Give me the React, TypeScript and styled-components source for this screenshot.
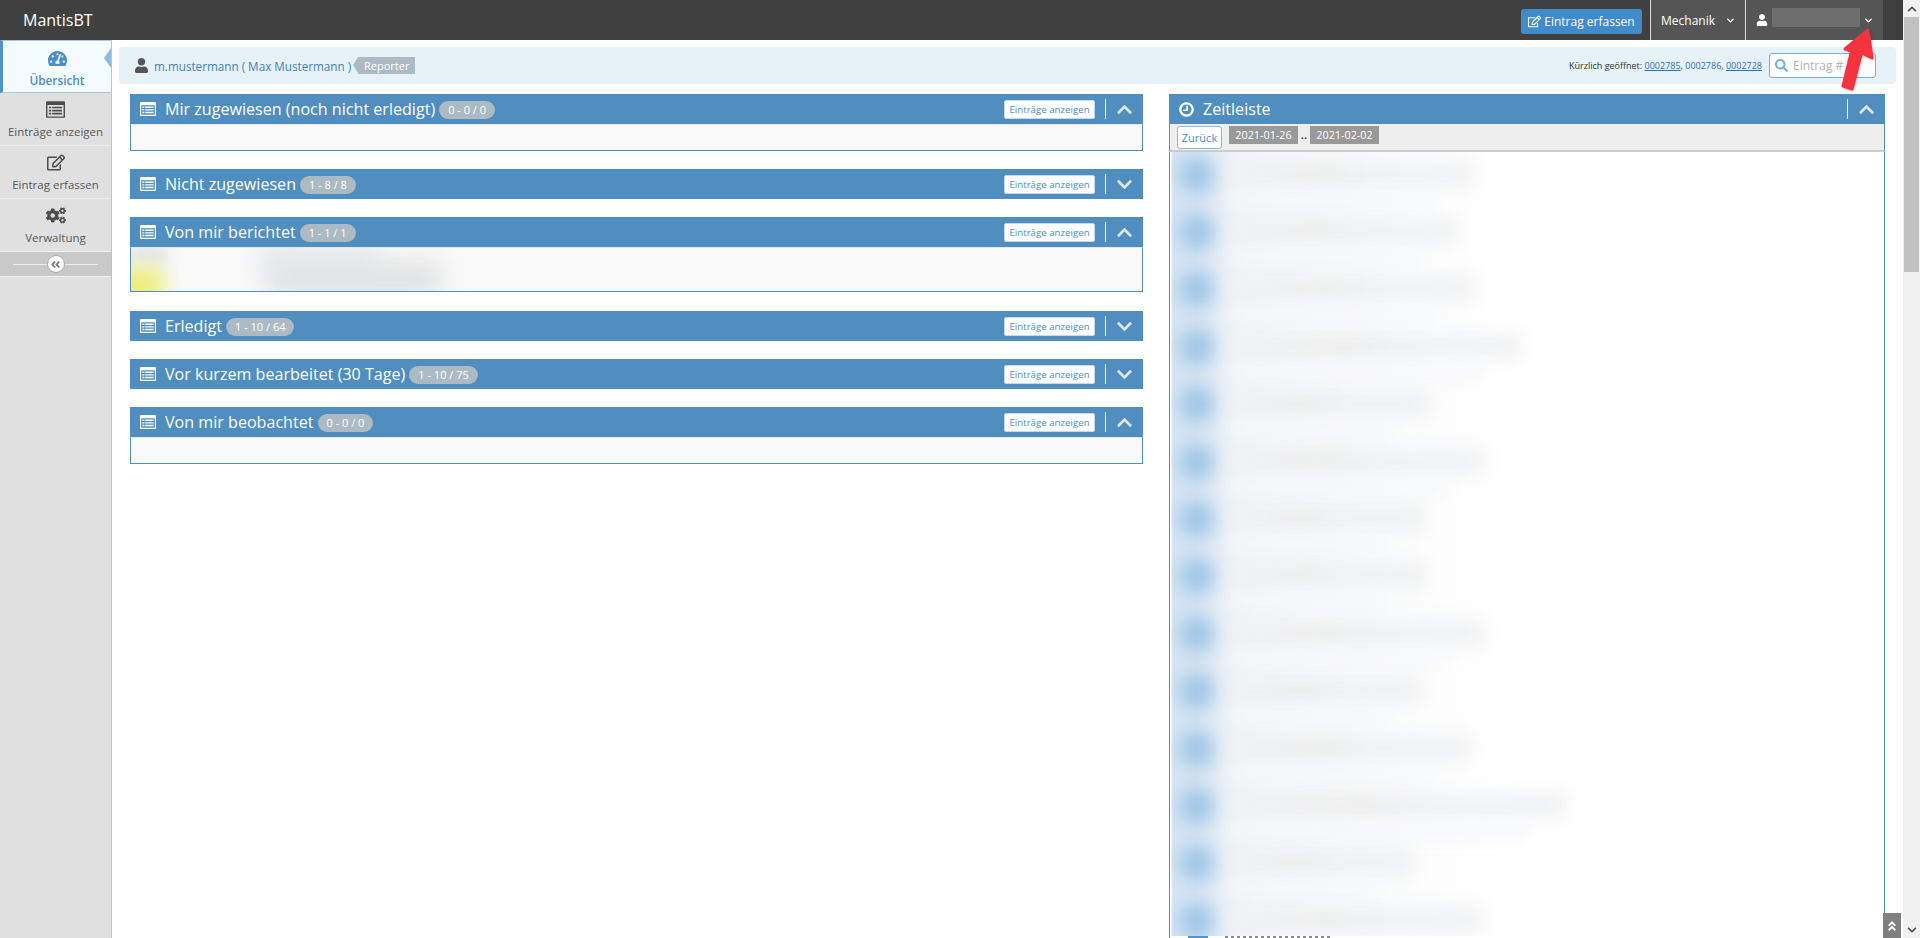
import styled, { createGlobalStyle } from "styled-components"
import {
  FaAngleDoubleLeft,
  FaAngleDoubleUp,
  FaChevronDown,
  FaChevronUp,
  FaCogs,
  FaRegEdit,
  FaSearch,
  FaTachometerAlt,
  FaUser,
} from "react-icons/fa"
import { FiChevronDown } from "react-icons/fi"

const BLUE = "#4f8ebf"

const GlobalStyle = createGlobalStyle`
  html, body {
    margin: 0;
    padding: 0;
    height: 100%;
    overflow: hidden;
    background: #fff;
    font-family: "Open Sans", "Liberation Sans", sans-serif;
  }
  * { box-sizing: border-box; }
`

const ListIcon = ({ size = 16 }: { size?: number }) => (
  <svg width={size} height={size * 0.875} viewBox="0 0 16 14" fill="currentColor">
    <path
      fillRule="evenodd"
      d="M1 0h14a1 1 0 0 1 1 1v12a1 1 0 0 1-1 1H1a1 1 0 0 1-1-1V1a1 1 0 0 1 1-1zM1.2 3.2v9.3a.3.3 0 0 0 .3.3h13a.3.3 0 0 0 .3-.3V3.2z"
    />
    <path d="M2.4 4.6h2v1.4h-2zM5.2 4.6h8.4v1.4H5.2zM2.4 7.2h2v1.4h-2zM5.2 7.2h8.4v1.4H5.2zM2.4 9.8h2v1.4h-2zM5.2 9.8h8.4v1.4H5.2z" />
  </svg>
)

const ClockIcon = () => (
  <svg width="15" height="15" viewBox="0 0 16 16" fill="none" stroke="currentColor">
    <circle cx="8" cy="8" r="6.6" strokeWidth="2.4" />
    <path d="M8.6 4v4.8H4.6" strokeWidth="1.8" />
  </svg>
)

const App = () => {
  return (
    <>
      <GlobalStyle />
      <Screen>
        <Page>
          <Navbar>
            <Brand>MantisBT</Brand>
            <NavRight>
              <ReportButton>
                <FaRegEdit size={13} />
                Eintrag erfassen
              </ReportButton>
              <NavItem $width={95}>
                Mechanik
                <FiChevronDown size={11} strokeWidth={3} />
              </NavItem>
              <UserItem>
                <FaUser size={12} />
                <HiddenName />
                <FiChevronDown size={11} strokeWidth={3} />
              </UserItem>
            </NavRight>
          </Navbar>
          <Below>
            <Sidebar>
              <ActiveMenuItem>
                <FaTachometerAlt size={19} />
                Übersicht
              </ActiveMenuItem>
              <MenuItem>
                <ListIcon size={19} />
                Einträge anzeigen
              </MenuItem>
              <MenuItem>
                <FaRegEdit size={18} />
                Eintrag erfassen
              </MenuItem>
              <MenuItem>
                <FaCogs size={20} />
                Verwaltung
              </MenuItem>
              <CollapseBar>
                <CollapseKnob>
                  <FaAngleDoubleLeft size={11} />
                </CollapseKnob>
              </CollapseBar>
            </Sidebar>
            <Main>
              <Breadcrumbs>
                <UserLine>
                  <FaUser size={15} />
                  <UserLink>m.mustermann ( Max Mustermann )</UserLink>
                  <RoleLabel>Reporter</RoleLabel>
                </UserLine>
                <Recent>
                  <span>
                    Kürzlich geöffnet: <RecentLink $done>0002785</RecentLink>,{" "}
                    <RecentLink>0002786</RecentLink>, <RecentLink $done>0002728</RecentLink>
                  </span>
                  <SearchBox>
                    <FaSearch size={13} />
                    <SearchInput placeholder="Eintrag #" />
                  </SearchBox>
                </Recent>
              </Breadcrumbs>
              <Columns>
                <LeftColumn>
                  <Widget title="Mir zugewiesen (noch nicht erledigt)" count="0 - 0 / 0" open>
                    <EmptyBody />
                  </Widget>
                  <Widget title="Nicht zugewiesen" count="1 - 8 / 8" />
                  <Widget title="Von mir berichtet" count="1 - 1 / 1" open>
                    <ReportedBody>
                      <BlurPatch $left={-4} $top={-6} $w={40} $h={24} $color="#e4e7e8" $blur={8} />
                      <BlurPatch $left={-18} $top={20} $w={50} $h={38} $color="#eded78" $blur={10} />
                      <BlurPatch $left={128} $top={-2} $w={120} $h={24} $color="#e6ebf1" $blur={11} />
                      <BlurPatch $left={135} $top={14} $w={175} $h={34} $color="#e0e1e2" $blur={12} />
                    </ReportedBody>
                  </Widget>
                  <ShiftedWidget>
                    <Widget title="Erledigt" count="1 - 10 / 64" />
                  </ShiftedWidget>
                  <Widget title="Vor kurzem bearbeitet (30 Tage)" count="1 - 10 / 75" />
                  <Widget title="Von mir beobachtet" count="0 - 0 / 0" open>
                    <EmptyBody />
                  </Widget>
                </LeftColumn>
                <Timeline>
                  <WidgetHeader>
                    <WidgetTitle>
                      <ClockIcon />
                      <TitleText>Zeitleiste</TitleText>
                    </WidgetTitle>
                    <WidgetTools>
                      <ToolDivider />
                      <FaChevronUp size={17} />
                    </WidgetTools>
                  </WidgetHeader>
                  <TimelineBar>
                    <BackButton>Zurück</BackButton>
                    <DateLabel>2021-01-26</DateLabel>
                    <DateDots>..</DateDots>
                    <DateLabel>2021-02-02</DateLabel>
                  </TimelineBar>
                  <TimelineBody>
                    <TimelineList>
                      {[306, 290, 306, 354, 264, 318, 258, 258, 318, 254, 304, 400, 246, 316].map((w, i) => (
                        <TimelineRow key={i}>
                          <BlurAvatar />
                          <BlurText>
                            <BlurLine $width={w} />
                            <BlurSubLine $width={w} />
                          </BlurText>
                        </TimelineRow>
                      ))}
                    </TimelineList>
                  </TimelineBody>
                  <NextEntry>
                    <NextAvatar />
                    <NextStrip />
                  </NextEntry>
                </Timeline>
              </Columns>
            </Main>
          </Below>
        </Page>
        <Scrollbar>
          <ScrollArrow>
            <FaChevronUp size={10} />
          </ScrollArrow>
          <ScrollThumb />
          <ScrollTrack />
          <ScrollArrow>
            <FaChevronDown size={10} />
          </ScrollArrow>
        </Scrollbar>
        <BackToTop>
          <FaAngleDoubleUp size={12} />
        </BackToTop>
        <PointerArrow viewBox="0 0 44 72" width="44" height="72">
          <path d="M29 3 L33 31 L22.500 26 L13 62 L4 59 L12.500 24 L6 22 Z" />
        </PointerArrow>
      </Screen>
    </>
  )
}

export default App

const Widget = ({
  title,
  count,
  open,
  children,
}: {
  title: string
  count: string
  open?: boolean
  children?: React.ReactNode
}) => (
  <div>
    <WidgetHeader>
      <WidgetTitle>
        <ListIcon />
        <TitleText>{title}</TitleText>
        <CountBadge>{count}</CountBadge>
      </WidgetTitle>
      <WidgetTools>
        <ShowButton>Einträge anzeigen</ShowButton>
        <ToolDivider />
        {open ? <FaChevronUp size={17} /> : <FaChevronDown size={17} />}
      </WidgetTools>
    </WidgetHeader>
    {children}
  </div>
)

const Screen = styled.div`
  display: flex;
  width: 1920px;
  height: 938px;
  overflow: hidden;
  position: relative;
`
const Page = styled.div`
  flex: 1;
  min-width: 0;
  display: flex;
  flex-direction: column;
`
const Navbar = styled.header`
  height: 40px;
  flex: none;
  display: flex;
  justify-content: space-between;
  background: #404040;
  color: #fff;
  padding-right: 20px;
`
const Brand = styled.div`
  font-size: 16px;
  line-height: 40px;
  padding-left: 23px;
`
const NavRight = styled.div`
  display: flex;
  align-items: stretch;
`
const ReportButton = styled.button`
  align-self: flex-start;
  margin: 9px 8px 0 0;
  width: 121px;
  height: 25px;
  display: flex;
  align-items: center;
  justify-content: center;
  gap: 3px;
  padding: 0;
  border: none;
  border-radius: 3px;
  background: #428bca;
  color: #fff;
  font: 12px "Open Sans", sans-serif;
`
const NavItem = styled.div<{ $width: number }>`
  width: ${p => p.$width}px;
  display: flex;
  align-items: center;
  gap: 10px;
  padding-left: 10px;
  background: #555;
  border-left: 1px solid #ddd;
  font-size: 12px;
`
const UserItem = styled(NavItem).attrs({ $width: 138 })`
  gap: 0;
  padding-left: 10px;
  & > svg:first-child {
    margin-right: 4px;
  }
  & > svg:last-child {
    margin-left: 3px;
  }
`
const HiddenName = styled.div`
  width: 88px;
  height: 19px;
  background: #6e6e6e;
  margin-top: -6px;
`
const Below = styled.div`
  flex: 1;
  min-height: 0;
  display: flex;
`
const Sidebar = styled.nav`
  width: 112px;
  flex: none;
  background: #e0e0e0;
  border-right: 1px solid #a9c9e2;
  display: flex;
  flex-direction: column;
`
const MenuItem = styled.div`
  height: 53px;
  display: flex;
  flex-direction: column;
  align-items: center;
  padding-top: 7px;
  gap: 5px;
  font-size: 11.500px;
  line-height: 16px;
  color: #585858;
  border-bottom: 1px solid #f0f0f0;
  white-space: nowrap;
  & > svg {
    height: 19px;
    flex: none;
    color: #4d4d4d;
  }
`
const ActiveMenuItem = styled(MenuItem)`
  position: relative;
  background: #f4fbff;
  color: #4b8fc8;
  font-weight: 600;
  font-size: 11.800px;
  border-left: 3px solid #4f94c8;
  border-top: 1px solid #a9c9e2;
  border-bottom: 1px solid #a9c9e2;
  margin-right: -1px;
  border-right: 1px solid #a9c9e2;
  padding-top: 8px;
  gap: 4px;
  & > svg {
    color: #4b8fc8;
  }
  &::after {
    content: "";
    position: absolute;
    right: 0;
    top: 7px;
    border: 10px solid transparent;
    border-left: none;
    border-right: 7px solid #8fbbdc;
  }
`
const CollapseBar = styled.div`
  height: 25px;
  display: flex;
  align-items: center;
  justify-content: center;
  background: #c9c9c9;
  border-bottom: 1px solid #f0f0f0;
  position: relative;
  &::before {
    content: "";
    position: absolute;
    left: 13px;
    right: 13px;
    top: 12px;
    border-top: 1px solid #eee;
  }
`
const CollapseKnob = styled.div`
  position: relative;
  width: 18px;
  height: 18px;
  border-radius: 50%;
  background: #fff;
  border: 1px solid #aaa;
  color: #777;
  display: flex;
  align-items: center;
  justify-content: center;
`
const Main = styled.main`
  flex: 1;
  min-width: 0;
  padding: 7px 7px 0;
  display: flex;
  flex-direction: column;
`
const Breadcrumbs = styled.div`
  height: 37px;
  flex: none;
  display: flex;
  align-items: center;
  justify-content: space-between;
  background: #e7f1f8;
  border-radius: 4px;
  padding: 0 20px 0 15px;
`
const UserLine = styled.div`
  display: flex;
  align-items: center;
  color: #555;
`
const UserLink = styled.span`
  margin-left: 5px;
  color: #3f84ba;
  font-size: 11.700px;
`
const RoleLabel = styled.span`
  position: relative;
  margin-left: 7px;
  height: 17px;
  width: 57px;
  background: #abbac3;
  color: #fff;
  font-size: 11px;
  line-height: 17px;
  text-align: center;
  &::before {
    content: "";
    position: absolute;
    left: -5px;
    top: 0;
    border: 8.500px solid transparent;
    border-left: none;
    border-right: 5px solid #abbac3;
  }
`
const Recent = styled.div`
  display: flex;
  align-items: center;
  gap: 7px;
  font-size: 9px;
  color: #333;
`
const RecentLink = styled.a<{ $done?: boolean }>`
  color: #2a72b5;
  text-decoration: ${p => (p.$done ? "underline" : "none")};
`
const SearchBox = styled.label`
  width: 107px;
  height: 25px;
  display: flex;
  align-items: center;
  gap: 5px;
  padding-left: 5px;
  background: #fff;
  border: 1px solid #6fb3e0;
  border-radius: 3px;
  color: #6fb3e0;
`
const SearchInput = styled.input`
  width: 80px;
  border: none;
  outline: none;
  padding: 0;
  background: none;
  font: 12px "Open Sans", sans-serif;
  &::placeholder {
    color: #b5b5b5;
    opacity: 1;
  }
`
const Columns = styled.div`
  flex: 1;
  min-height: 0;
  display: grid;
  grid-template-columns: 1013px 716px;
  column-gap: 26px;
  padding: 10px 11px 0;
`
const LeftColumn = styled.div`
  display: flex;
  flex-direction: column;
  gap: 18px;
`
const ShiftedWidget = styled.div`
  margin-top: 1px;
`
const WidgetHeader = styled.div`
  height: 30px;
  display: flex;
  align-items: center;
  justify-content: space-between;
  padding: 0 10px;
  background: ${BLUE};
  color: #fff;
`
const WidgetTitle = styled.div`
  display: flex;
  align-items: center;
`
const TitleText = styled.span`
  margin-left: 9px;
  font-size: 16.100px;
  line-height: 28px;
`
const CountBadge = styled.span`
  margin-left: 4px;
  height: 18px;
  padding: 0 9px;
  border-radius: 9px;
  background: #abbac3;
  font-size: 11px;
  line-height: 18px;
  margin-top: 2px;
`
const WidgetTools = styled.div`
  display: flex;
  align-items: center;
  color: #e4e4e4;
`
const ShowButton = styled.button`
  width: 91px;
  height: 19px;
  padding: 0;
  background: #fff;
  border: 1px solid #c5d9ea;
  border-radius: 2px;
  color: ${BLUE};
  font: 9.700px "Open Sans", sans-serif;
`
const ToolDivider = styled.div`
  width: 1px;
  height: 20px;
  margin: 0 10px;
  background: #f0f5fa;
`
const EmptyBody = styled.div`
  height: 27px;
  background: #f9f9f9;
  border: 1px solid ${BLUE};
  border-top: 1px solid #e8e8e8;
`
const ReportedBody = styled.div`
  position: relative;
  height: 45px;
  background: #f9f9f9;
  border: 1px solid ${BLUE};
  border-top: 1px solid #e8e8e8;
  overflow: hidden;
`
const BlurPatch = styled.div<{ $left: number; $top: number; $w: number; $h: number; $color: string; $blur: number }>`
  position: absolute;
  left: ${p => p.$left}px;
  top: ${p => p.$top}px;
  width: ${p => p.$w}px;
  height: ${p => p.$h}px;
  background: ${p => p.$color};
  filter: blur(${p => p.$blur}px);
`
const Timeline = styled.section`
  display: flex;
  flex-direction: column;
  min-height: 0;
  overflow: hidden;
`
const TimelineBar = styled.div`
  height: 28px;
  flex: none;
  display: flex;
  align-items: flex-start;
  padding: 2px 0 0 7px;
  background: #eee;
  border-left: 1px solid ${BLUE};
  border-right: 1px solid ${BLUE};
  border-bottom: 2px solid #ccc;
`
const BackButton = styled.button`
  width: 45px;
  height: 23px;
  margin-right: 7px;
  padding: 0;
  background: #fff;
  border: 1px solid #8fb8d8;
  border-radius: 3px;
  color: ${BLUE};
  font: 11px "Open Sans", sans-serif;
`
const DateLabel = styled.span`
  width: 69px;
  height: 18px;
  background: #999;
  color: #fff;
  font-size: 10.800px;
  line-height: 17px;
  text-align: center;
`
const DateDots = styled.span`
  width: 12px;
  font-size: 11px;
  font-weight: 700;
  line-height: 18px;
  text-align: center;
  color: #444;
`
const TimelineBody = styled.div`
  flex: 1;
  min-height: 0;
  overflow: hidden;
  border-left: 1px solid ${BLUE};
  border-right: 1px solid ${BLUE};
  background: linear-gradient(to right, #d6e5f3 0, #d6e5f3 26px, #f0f4f8 66px, #f8f9fa 140px, #fff 330px);
  box-shadow: inset 2px 0 0 #fff;
`
const TimelineList = styled.div`
  margin-top: -6px;
`
const TimelineRow = styled.div`
  height: 57.4px;
  display: flex;
  align-items: center;
  padding-left: 9px;
`
const BlurAvatar = styled.div`
  width: 36px;
  height: 36px;
  flex: none;
  border-radius: 50%;
  background: #a0c6e6;
  filter: blur(9px);
`
const BlurText = styled.div`
  margin-left: 14px;
  padding-top: 20px;
  display: flex;
  flex-direction: column;
  gap: 8px;
`
const BlurLine = styled.div<{ $width: number }>`
  width: ${p => p.$width - 62}px;
  height: 22px;
  background: linear-gradient(to right, #f0f1f2, #ececec 40%, #edf1f6 70%, #eeeeee);
  filter: blur(10px);
`
const BlurSubLine = styled.div<{ $width: number }>`
  width: ${p => p.$width - 100}px;
  height: 14px;
  background: #f6f7f9;
  filter: blur(8px);
`
const NextEntry = styled.div`
  height: 2px;
  flex: none;
  display: flex;
  align-items: flex-start;
  padding-left: 18px;
  border-left: 1px solid ${BLUE};
  border-right: 1px solid ${BLUE};
  overflow: hidden;
`
const NextAvatar = styled.div`
  width: 20px;
  height: 2px;
  background: #4f94c8;
`
const NextStrip = styled.div`
  margin-left: 17px;
  width: 107px;
  height: 2px;
  background: repeating-linear-gradient(to right, #8a8a8a 0, #8a8a8a 3px, #fff 3px, #fff 6px);
`
const Scrollbar = styled.aside`
  width: 17px;
  flex: none;
  display: flex;
  flex-direction: column;
  background: #f1f1f1;
`
const ScrollArrow = styled.div`
  height: 17px;
  flex: none;
  display: flex;
  align-items: center;
  justify-content: center;
  color: #505050;
`
const ScrollThumb = styled.div`
  height: 255px;
  flex: none;
  margin: 0 1px;
  background: #c1c1c1;
`
const ScrollTrack = styled.div`
  flex: 1;
`
const BackToTop = styled.div`
  position: absolute;
  left: 1883px;
  top: 913px;
  width: 18px;
  height: 25px;
  display: flex;
  align-items: center;
  justify-content: center;
  background: #808080;
  color: #fff;
`
const PointerArrow = styled.svg`
  position: absolute;
  left: 1839px;
  top: 27px;
  fill: #f5333f;
  stroke: #f5333f;
  stroke-width: 3;
  stroke-linejoin: round;
  filter: drop-shadow(1px 1px 1px rgba(0, 0, 0, 0.2));
`
